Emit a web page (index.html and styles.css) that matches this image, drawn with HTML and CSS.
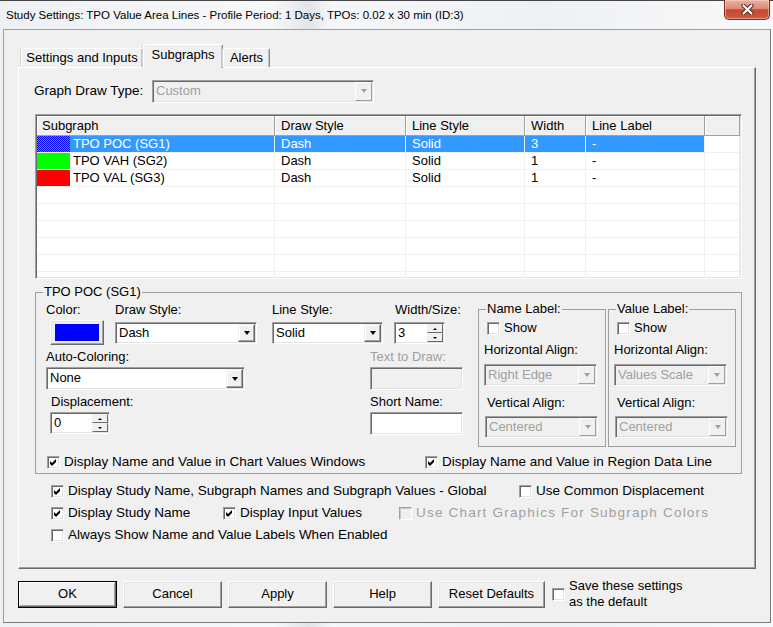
FILE: index.html
```html
<!DOCTYPE html>
<html lang="en">
<head>
  <meta charset="UTF-8" />
  <title>Study Settings</title>
  <link rel="stylesheet" href="styles.css">
</head>
<body>
  <div class="window">
    <div class="titlebar">
      <span class="title">Study Settings: TPO Value Area Lines - Profile Period: 1 Days, TPOs: 0.02 x 30 min (ID:3)</span>
      <div class="close">
        <svg width="13" height="11" viewBox="0 0 13 11">
          <path d="M2.5 1.5l8 8M10.5 1.5l-8 8" stroke="#5a2418" stroke-width="4.2" stroke-linecap="round"/>
          <path d="M2.5 1.5l8 8M10.5 1.5l-8 8" stroke="#fff" stroke-width="2.2" stroke-linecap="round"/>
        </svg>
      </div>
    </div>

    <div class="client">
      <div class="tabs">
        <div class="tab tab-settings">Settings and Inputs</div>
        <div class="tab tab-sub active">Subgraphs</div>
        <div class="tab tab-alerts">Alerts</div>
      </div>

      <div class="page">
        <div class="drawtype">
          <span class="drawtype-label">Graph Draw Type:</span>
          <div class="combo sunken disabled cmb-type"><span class="val">Custom</span><span class="drop"></span></div>
        </div>

        <!-- subgraph list -->
        <div class="list sunken">
          <div class="lv-head">
            <div class="hc first">Subgraph</div>
            <div class="hc">Draw Style</div>
            <div class="hc">Line Style</div>
            <div class="hc">Width</div>
            <div class="hc">Line Label</div>
            <div class="hc"></div>
          </div>
          <div class="lv-row selected">
            <div class="c sg"><span class="swatch sw-poc"></span>TPO POC (SG1)</div>
            <div class="c">Dash</div>
            <div class="c">Solid</div>
            <div class="c">3</div>
            <div class="c">-</div>
            <div class="c fill"></div>
          </div>
          <div class="lv-row">
            <div class="c sg"><span class="swatch sw-vah"></span>TPO VAH (SG2)</div>
            <div class="c">Dash</div>
            <div class="c">Solid</div>
            <div class="c">1</div>
            <div class="c">-</div>
            <div class="c fill"></div>
          </div>
          <div class="lv-row">
            <div class="c sg"><span class="swatch sw-val"></span>TPO VAL (SG3)</div>
            <div class="c">Dash</div>
            <div class="c">Solid</div>
            <div class="c">1</div>
            <div class="c">-</div>
            <div class="c fill"></div>
          </div>
          <div class="lv-row"><div class="c"></div><div class="c"></div><div class="c"></div><div class="c"></div><div class="c"></div><div class="c fill"></div></div>
          <div class="lv-row"><div class="c"></div><div class="c"></div><div class="c"></div><div class="c"></div><div class="c"></div><div class="c fill"></div></div>
          <div class="lv-row"><div class="c"></div><div class="c"></div><div class="c"></div><div class="c"></div><div class="c"></div><div class="c fill"></div></div>
          <div class="lv-row"><div class="c"></div><div class="c"></div><div class="c"></div><div class="c"></div><div class="c"></div><div class="c fill"></div></div>
          <div class="lv-row"><div class="c"></div><div class="c"></div><div class="c"></div><div class="c"></div><div class="c"></div><div class="c fill"></div></div>
          <div class="lv-row"><div class="c"></div><div class="c"></div><div class="c"></div><div class="c"></div><div class="c"></div><div class="c fill"></div></div>
        </div>

        <!-- selected subgraph settings -->
        <fieldset class="group">
          <legend>TPO POC (SG1)</legend>
          <div class="gbody">
            <div class="gleft">
              <div class="frow row1">
                <div class="field f-color">
                  <span class="lbl">Color:</span>
                  <div class="colorbtn raised"><span class="colorfill"></span></div>
                </div>
                <div class="field f-draw">
                  <span class="lbl">Draw Style:</span>
                  <div class="combo sunken cmb-draw"><span class="val">Dash</span><span class="drop"></span></div>
                </div>
                <div class="field f-line">
                  <span class="lbl">Line Style:</span>
                  <div class="combo sunken cmb-line"><span class="val">Solid</span><span class="drop"></span></div>
                </div>
                <div class="field f-width">
                  <span class="lbl">Width/Size:</span>
                  <div class="spin sunken spin-width"><span class="val">3</span><span class="spinbtns"><span class="sb up"></span><span class="sb down"></span></span></div>
                </div>
              </div>
              <div class="frow">
                <div class="field f-wide">
                  <span class="lbl">Auto-Coloring:</span>
                  <div class="combo sunken cmb-auto"><span class="val">None</span><span class="drop"></span></div>
                </div>
                <div class="field">
                  <span class="lbl dim">Text to Draw:</span>
                  <div class="edit sunken disabled edit-txt"></div>
                </div>
              </div>
              <div class="frow">
                <div class="field f-wide f-disp">
                  <span class="lbl">Displacement:</span>
                  <div class="spin sunken spin-disp"><span class="val">0</span><span class="spinbtns"><span class="sb up"></span><span class="sb down"></span></span></div>
                </div>
                <div class="field">
                  <span class="lbl">Short Name:</span>
                  <div class="edit sunken edit-txt"></div>
                </div>
              </div>
            </div>

            <div class="gright">
              <fieldset class="lblgroup">
                <legend>Name Label:</legend>
                <label class="chk show-row"><span class="cb"></span>Show</label>
                <div class="lbl ha">Horizontal Align:</div>
                <div class="combo sunken disabled cmb-align"><span class="val">Right Edge</span><span class="drop"></span></div>
                <div class="lbl va">Vertical Align:</div>
                <div class="combo sunken disabled cmb-align cmb-v"><span class="val">Centered</span><span class="drop"></span></div>
              </fieldset>
              <fieldset class="lblgroup">
                <legend>Value Label:</legend>
                <label class="chk show-row"><span class="cb"></span>Show</label>
                <div class="lbl ha">Horizontal Align:</div>
                <div class="combo sunken disabled cmb-align"><span class="val">Values Scale</span><span class="drop"></span></div>
                <div class="lbl va">Vertical Align:</div>
                <div class="combo sunken disabled cmb-align cmb-v"><span class="val">Centered</span><span class="drop"></span></div>
              </fieldset>
            </div>
          </div>

          <div class="grp-checks">
            <label class="chk gc-first"><span class="cb"><svg viewBox="0 0 9 9"><path d="M1 3l2 2 4-4v3L3 8 1 6z"/></svg></span>Display Name and Value in Chart Values Windows</label>
            <label class="chk"><span class="cb"><svg viewBox="0 0 9 9"><path d="M1 3l2 2 4-4v3L3 8 1 6z"/></svg></span>Display Name and Value in Region Data Line</label>
          </div>
        </fieldset>

        <div class="opts">
          <label class="chk span3"><span class="cb"><svg viewBox="0 0 9 9"><path d="M1 3l2 2 4-4v3L3 8 1 6z"/></svg></span>Display Study Name, Subgraph Names and Subgraph Values - Global</label>
          <label class="chk"><span class="cb"></span>Use Common Displacement</label>
          <label class="chk"><span class="cb"><svg viewBox="0 0 9 9"><path d="M1 3l2 2 4-4v3L3 8 1 6z"/></svg></span>Display Study Name</label>
          <label class="chk"><span class="cb"><svg viewBox="0 0 9 9"><path d="M1 3l2 2 4-4v3L3 8 1 6z"/></svg></span>Display Input Values</label>
          <label class="chk dim span2 wide-dim"><span class="cb off"></span>Use Chart Graphics For Subgraph Colors</label>
          <label class="chk span4"><span class="cb"></span>Always Show Name and Value Labels When Enabled</label>
        </div>
      </div>

      <div class="buttons">
        <div class="btn raised default">OK</div>
        <div class="btn raised">Cancel</div>
        <div class="btn raised">Apply</div>
        <div class="btn raised">Help</div>
        <div class="btn raised btn-reset">Reset Defaults</div>
        <label class="chk save"><span class="cb"></span><span>Save these settings<br>as the default</span></label>
      </div>
    </div>
  </div>
</body>
</html>
```

FILE: styles.css
```css
* {
  box-sizing: border-box;
  margin: 0;
  padding: 0;
}

body {
  width: 773px;
  height: 627px;
  overflow: hidden;
  font-family: "Liberation Sans", Arial, sans-serif;
  font-size: 13px;
  line-height: 16px;
  color: #000;
  background: #eceff2;
}

/* window frame */
.window {
  width: 773px;
  height: 627px;
  padding: 0 2px 0 3px;
  border-top: 1px solid #454545;
  background: linear-gradient(90deg, #eef1f4 0%, #f7f8fa 35%, #e2e5e8 40%, #f6f7f9 43%, #eef1f4 70%, #f8f9fa 100%);
}

.titlebar {
  height: 28px;
  display: flex;
}

.title {
  padding: 6px 0 0 3px;
  font-size: 11.5px;
  line-height: 16px;
  color: #000;
}

.close {
  margin: -1px 1px 0 auto;
  width: 46px;
  height: 20px;
  display: flex;
  align-items: center;
  justify-content: center;
  border: 1px solid #7b2a1c;
  border-top: none;
  border-radius: 0 0 5px 5px;
  background: linear-gradient(#eab0a2 0%, #dc8a76 45%, #c8472f 52%, #cf5b3f 100%);
  box-shadow: inset 0 0 0 1px rgba(255, 220, 210, 0.5);
}

.client {
  height: 594px;
  border: 1px solid;
  border-color: #a0a0a0 #7a7a7a #7a7a7a #a0a0a0;
  background: #f0f0f0;
  padding: 14px 0 0 14px;
}

/* shared 3D borders */
.sunken {
  border: 1px solid;
  border-color: #a0a0a0 #fff #fff #a0a0a0;
  box-shadow: inset 1px 1px #696969, inset -1px -1px #e3e3e3;
  padding: 1px;
  background: #fff;
}

.raised {
  border: 1px solid;
  border-color: #fff #696969 #696969 #fff;
  box-shadow: inset -1px -1px #a0a0a0, inset 1px 1px #e3e3e3;
  background: #f0f0f0;
}

/* tabs */
.tabs {
  display: flex;
  align-items: flex-end;
  height: 23px;
  padding-left: 3px;
  position: relative;
  z-index: 1;
}

.tab {
  height: 19px;
  border: 1px solid;
  border-bottom: none;
  border-color: #fff #8a8a8a #fff #fff;
  box-shadow: inset -1px 0 #c4c4c4, -1px 0 #d8d8d8;
  border-radius: 2px 2px 0 0;
  background: #f0f0f0;
  text-align: center;
  line-height: 17px;
}

.tab.active {
  height: 24px;
  margin-bottom: -1px;
  line-height: 20px;
}

.tab-settings { width: 122px; }
.tab-sub { width: 80px; }
.tab-alerts { width: 47px; }

.page {
  width: 738px;
  height: 502px;
  border: 1px solid;
  border-color: #fff #696969 #696969 #fff;
  box-shadow: inset -1px -1px #a0a0a0;
  padding: 12px 13px 0 16px;
}

.drawtype {
  display: flex;
  align-items: center;
  height: 22px;
}

.drawtype-label {
  width: 118px;
  margin-left: -1px;
  font-size: 13.5px;
}

/* combo boxes */
.combo {
  display: flex;
  height: 22px;
}

.combo .val {
  flex: 1;
  padding-left: 2px;
  line-height: 18px;
  white-space: nowrap;
  overflow: hidden;
}

.combo .drop {
  width: 17px;
  display: flex;
  align-items: center;
  justify-content: center;
  border: 1px solid;
  border-color: #f0f0f0 #696969 #696969 #f0f0f0;
  box-shadow: inset -1px -1px #a0a0a0, inset 1px 1px #fff;
  background: #f0f0f0;
}

.combo .drop::after {
  content: "";
  border-style: solid;
  border-width: 4px 3.5px 0;
  border-color: #000 transparent transparent;
}

.combo.disabled,
.edit.disabled {
  background: #f0f0f0;
}

.combo.disabled .val {
  color: #a0a0a0;
}

.combo.disabled .drop {
  border-color: #fff #a0a0a0 #a0a0a0 #fff;
  box-shadow: none;
}

.combo.disabled .drop::after {
  border-top-color: #a0a0a0;
}

.cmb-type { width: 222px; height: 23px; }
.cmb-draw { width: 142px; }
.cmb-line { width: 111px; }
.cmb-auto { width: 199px; height: 23px; }
.cmb-align { width: 113px; }

/* list view */
.list {
  margin-top: 12px;
  width: 707px;
  height: 165px;
  overflow: hidden;
}

.lv-head,
.lv-row {
  display: grid;
  grid-template-columns: 238px 131px 119px 61px 119px 1fr;
}

.lv-head {
  height: 20px;
}

.hc {
  background: #f0f0f0;
  border-right: 1px solid #a0a0a0;
  border-bottom: 1px solid #a0a0a0;
  box-shadow: inset 1px 1px #fff;
  padding-left: 6px;
  line-height: 19px;
}

.hc.first {
  padding-left: 5px;
}

.lv-row {
  height: 17px;
}

.c {
  border-right: 1px solid #f0f0f0;
  border-bottom: 1px solid #f0f0f0;
  padding-left: 6px;
  line-height: 16px;
  white-space: nowrap;
}

.c.sg {
  display: flex;
  padding-left: 0;
}

.swatch {
  width: 33px;
  height: 16px;
  margin-right: 3px;
}

.sw-poc { background: repeating-conic-gradient(#0000ff 0% 25%, #3399ff 0% 50%) 0 0 / 2px 2px; }
.sw-vah { background: #00ff00; }
.sw-val { background: #ff0000; }

.lv-row.selected .c {
  background: #3399ff;
  color: #fff;
}

.lv-row.selected .c.fill {
  background: #fff;
}

/* group boxes */
fieldset {
  border: 1px solid #a0a0a0;
  min-width: 0;
}

legend {
  padding: 0 1px;
  line-height: 16px;
  font-weight: normal;
}

.group {
  width: 707px;
  margin-top: 5px;
  padding: 0 0 3px 10px;
}

.group > legend {
  margin-left: -3px;
}

.gbody {
  display: flex;
  padding-top: 2px;
}

.gleft {
  width: 432px;
}

.frow {
  display: flex;
  margin-top: 4px;
}

.frow.row1 {
  margin-top: 0;
}

.field {
  display: flex;
  flex-direction: column;
  align-items: flex-start;
}

.field .lbl {
  line-height: 16px;
  margin-bottom: 2px;
}

.row1 .combo,
.row1 .spin {
  margin-top: 2px;
}

.f-color { width: 69px; }
.f-draw { width: 157px; }
.f-line { width: 122px; }
.f-width .lbl { margin-left: 1px; }
.f-wide { width: 324px; }
.f-disp .lbl { margin-left: 5px; }
.f-disp .spin { margin-left: 4px; }

.dim {
  color: #a0a0a0;
}

.colorbtn {
  margin-left: 4px;
  width: 54px;
  height: 25px;
  padding: 3px 4px;
}

.colorfill {
  display: block;
  height: 100%;
  background: #0000ff;
}

.edit {
  height: 23px;
}

.edit-txt { width: 93px; }

.spin {
  display: flex;
  height: 22px;
}

.spin .val {
  flex: 1;
  padding-left: 2px;
  line-height: 18px;
}

.spin-width { width: 51px; }
.spin-disp { width: 60px; }

.spinbtns {
  width: 16px;
  display: flex;
  flex-direction: column;
}

.sb {
  flex: 1;
  display: flex;
  align-items: center;
  justify-content: center;
  border: 1px solid;
  border-color: #f0f0f0 #696969 #696969 #f0f0f0;
  background: #f0f0f0;
}

.sb::after {
  content: "";
  border-style: solid;
}

.sb.up::after {
  border-width: 0 2px 2px;
  border-color: transparent transparent #000;
}

.sb.down::after {
  border-width: 2px 2px 0;
  border-color: #000 transparent transparent;
}

.gright {
  display: flex;
  gap: 2px;
}

.lblgroup {
  width: 128px;
  height: 146px;
  margin-top: -1px;
  padding: 0 0 0 5px;
}

.lblgroup > legend {
  margin-left: 2px;
}

.show-row {
  margin: 3px 0 0 3px;
}

.lbl.ha {
  margin-top: 6px;
}

.lblgroup .combo {
  margin-top: 6px;
}

.lbl.va {
  margin: 9px 0 0 3px;
}

.lblgroup .cmb-v {
  margin: 5px 0 0 1px;
}

/* check boxes */
.chk {
  display: flex;
  align-items: center;
  gap: 4px;
  white-space: nowrap;
  line-height: 16px;
}

.cb {
  width: 13px;
  height: 13px;
  flex: none;
  display: flex;
  align-items: center;
  justify-content: center;
  border: 1px solid;
  border-color: #a0a0a0 #fff #fff #a0a0a0;
  box-shadow: inset 1px 1px #696969, inset -1px -1px #e3e3e3;
  background: #fff;
}

.cb svg {
  width: 9px;
  height: 9px;
  fill: #000;
}

.cb.off {
  background: #f0f0f0;
  box-shadow: inset 1px 1px #c8c8c8;
}

.grp-checks {
  display: flex;
  margin: 7px 0 0 1px;
  font-size: 13.5px;
}

.gc-first {
  width: 378px;
}

.opts {
  display: grid;
  grid-template-columns: 172px 176px 120px 1fr;
  grid-auto-rows: 22px;
  align-items: center;
  margin: 6px 0 0 16px;
  font-size: 13.5px;
}

.wide-dim {
  letter-spacing: 1.2px;
}

.span2 { grid-column: span 2; }
.span3 { grid-column: span 3; }
.span4 { grid-column: span 4; }

/* dialog buttons */
.buttons {
  display: flex;
  align-items: center;
  gap: 6px;
  margin-top: 9px;
}

.btn {
  width: 99px;
  height: 27px;
  display: flex;
  align-items: center;
  justify-content: center;
}

.btn.default {
  border-color: #000;
  box-shadow: inset -1px -1px #696969, inset 1px 1px #fff, inset -2px -2px #a0a0a0;
}

.btn-reset {
  width: 107px;
}

.save {
  margin-left: 1px;
  line-height: 16px;
}
```
